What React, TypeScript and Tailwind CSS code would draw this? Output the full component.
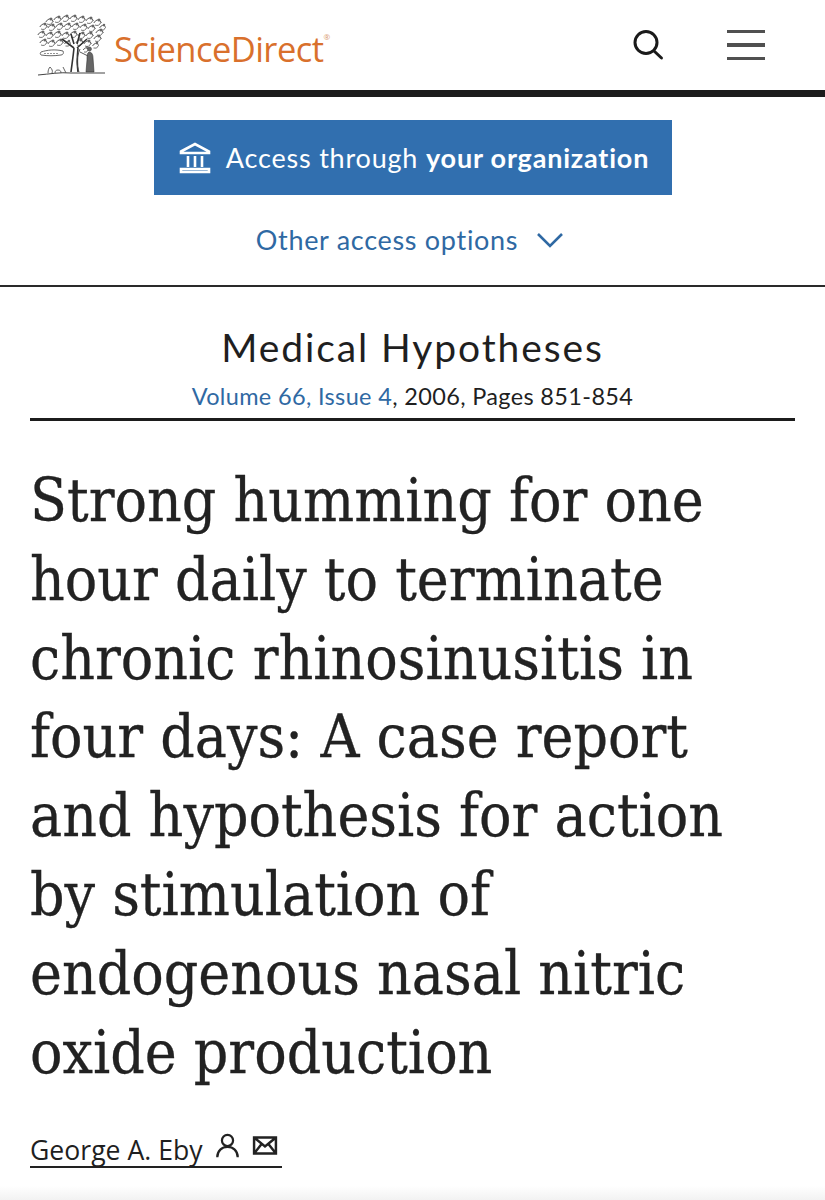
const sans = "font-['Lato','Noto_Sans',sans-serif]";

function TreeLogo() {
  const leaves = [
    [50, 19, 6], [58, 17, 6], [66, 16, 6], [74, 16, 6], [82, 17, 6], [90, 18, 6], [98, 20, 6], [103, 25, 5],
    [44, 24, 6], [52, 25, 6], [60, 24, 6], [68, 24, 6], [76, 24, 6], [84, 25, 6], [92, 26, 6], [100, 30, 6],
    [42, 32, 6], [50, 33, 6], [58, 32, 6], [66, 33, 6], [74, 32, 6], [82, 33, 6], [90, 33, 6], [98, 36, 6],
    [44, 40, 6], [52, 41, 6], [60, 40, 6], [68, 41, 5], [80, 40, 6], [88, 41, 6], [96, 43, 5], [86, 47, 4],
  ];
  return (
    <svg width="70" height="62" viewBox="37 12 70 62" className="shrink-0" fill="none" stroke="#444" strokeWidth="0.9">
      {leaves.map(([x, y, r], i) => (
        <g key={i}>
          <path d={`M${x - r * 0.7} ${y + 1}q${r * 0.6} ${-r} ${r * 1.3} -0.5`} />
          <path d={`M${x - r * 0.5} ${y + 3}q${r * 0.7} ${r * 0.3} ${r} ${-r * 0.5}`} stroke="#666" />
          <circle cx={x + 1} cy={y - 2} r={r * 0.25} fill="#666" stroke="none" />
        </g>
      ))}
      <path d="M71 70c1-8 2-14 3-24M78 70c-1-8-1-14 0-24M74 46l-12-9M77 46l10-9M74 42l-3-10M77 42l3-11" stroke="#333" strokeWidth="1.6" />
      <path d="M80 47c-2 5-3 9-3 13 0 3 1 7 2 10" stroke="#444" />
      <path d="M89 50c3 0 4 3 4 6l1 14h-8l1-12c0-4 0-7 2-8z" fill="#666" stroke="#333" strokeWidth="0.6" />
      <circle cx="89.500" cy="47" r="2" fill="#666" stroke="#333" strokeWidth="0.5" />
      <path d="M80 50l8 4" stroke="#444" />
      <path d="M41 50c6-2 14-3 22-1 1 2 0 4-2 4-7 1-13 1-20 0-1-1-1-2 0-3z" fill="#fff" stroke="#555" />
      <path d="M44 51.500h15" stroke="#888" strokeDasharray="2 1" />
      <path d="M38 73c12-1 22-3 33-2h34" stroke="#444" strokeWidth="1" />
      <path d="M48 71c0-3 1-5 2-6 2 2 3 4 2 6M55 71c0-2 1-3 3-3s3 1 3 3M66 71l-3-6" stroke="#555" />
    </svg>
  );
}

export default function App() {
  return (
    <div className={`relative w-[825px] h-[1200px] bg-white overflow-hidden text-[#1f1f1f] [font-variant-ligatures:none] ${sans}`}>
      <header className="h-[90px] flex items-center pl-[37px] pr-[60px]">
        <TreeLogo />
        <a className="ml-[7px] mt-[9px] text-[#d9702c] text-[34.500px] tracking-[-0.55px] leading-none font-['Open_Sans',sans-serif]">
          ScienceDirect<sup className="text-[8px] text-[#d99a70] align-[18px]">®</sup>
        </a>
        <div className="ml-auto flex items-center gap-[63px]">
          <svg width="32" height="32" viewBox="0 0 32 32" fill="none" stroke="#1a1a1a" strokeWidth="3">
            <circle cx="14" cy="13.5" r="11" />
            <path d="M22 22l7.5 7" strokeLinecap="round" />
          </svg>
          <div className="flex flex-col gap-[10px] w-[38px]">
            <div className="h-[3.5px] bg-[#505050]" />
            <div className="h-[3.5px] bg-[#505050]" />
            <div className="h-[3.5px] bg-[#505050]" />
          </div>
        </div>
      </header>
      <div className="h-[7px] bg-[#1c1c1c]" />

      <section className="h-[190px] border-b-2 border-[#2a2a2a] flex flex-col items-center pt-[23px]">
        <button className="w-[518px] h-[75px] pl-[3px] bg-[#316faf] text-white flex items-center justify-center gap-[15px] text-[27px] leading-none tracking-[0.8px]">
          <svg width="32" height="33" viewBox="0 0 32 33" fill="none" stroke="white" strokeWidth="2.6">
            <path d="M2 10.5L16 3l14 7.5v1.5H2z" />
            <path d="M9 15v11M16 15v11M23 15v11" />
            <path d="M2 31v-3h28v3z" />
          </svg>
          <span>
            Access through <b className="font-bold">your organization</b>
          </span>
        </button>
        <a className="mt-[25px] mr-[5px] flex items-center gap-[18px] text-[#2f69a3] text-[27px] leading-[40px] tracking-[0.7px]">
          Other access options
          <svg width="28" height="16" viewBox="0 0 28 16" fill="none" stroke="#2f69a3" strokeWidth="2.6">
            <path d="M2 2l12 12L26 2" />
          </svg>
        </a>
      </section>

      <main className="px-[30px]">
        <div className="pt-[35px] text-center">
          <h2 className="text-[39px] leading-[50px] tracking-[1.9px]">Medical Hypotheses</h2>
          <p className="mt-[9px] text-[23.5px] leading-[30px] tracking-[0.35px]">
            <a className="text-[#2f69a3]">Volume 66, Issue 4</a>, 2006, Pages 851-854
          </p>
        </div>
        <div className="mt-[7px] h-[3px] bg-[#1c1c1c]" />

        <h1 className="mt-[40px] font-['DejaVu_Serif_Condensed','DejaVu_Serif',serif] [font-stretch:condensed] [-webkit-text-stroke:0.3px_#222] text-[60px] leading-[78.8px] text-[#222]">
          Strong humming for one
          <br />
          hour daily to terminate
          <br />
          chronic rhinosinusitis in
          <br />
          four days: A case report
          <br />
          and hypothesis for action
          <br />
          by stimulation of
          <br />
          endogenous nasal nitric
          <br />
          oxide production
        </h1>

        <div className="mt-[31px] flex items-center h-[46px] border-b-2 border-[#222] w-[252px] text-[26.600px] whitespace-nowrap font-['Open_Sans',sans-serif]">
          <span className="mt-[12px] leading-none">George A. Eby</span>
          <svg className="ml-[12px] mt-[4px] shrink-0" width="25" height="26" viewBox="0 0 26 28" fill="none" stroke="#222" strokeWidth="2.4">
            <circle cx="13" cy="8" r="6" />
            <path d="M2 26c0-7 5-11 11-11s11 4 11 11" />
          </svg>
          <svg className="ml-[12px] mt-[2px] shrink-0" width="26" height="19" viewBox="0 0 26 20" fill="none" stroke="#222" strokeWidth="2.6">
            <path d="M1.5 1.5h23v17h-23zM1.5 1.5L13 11 24.5 1.5M1.5 18.5L9 9M24.5 18.5L17 9" />
          </svg>
        </div>
      </main>
      <div className="absolute bottom-0 left-0 right-0 h-[14px] bg-gradient-to-b from-white to-[#f2f2f2]" />
    </div>
  );
}
